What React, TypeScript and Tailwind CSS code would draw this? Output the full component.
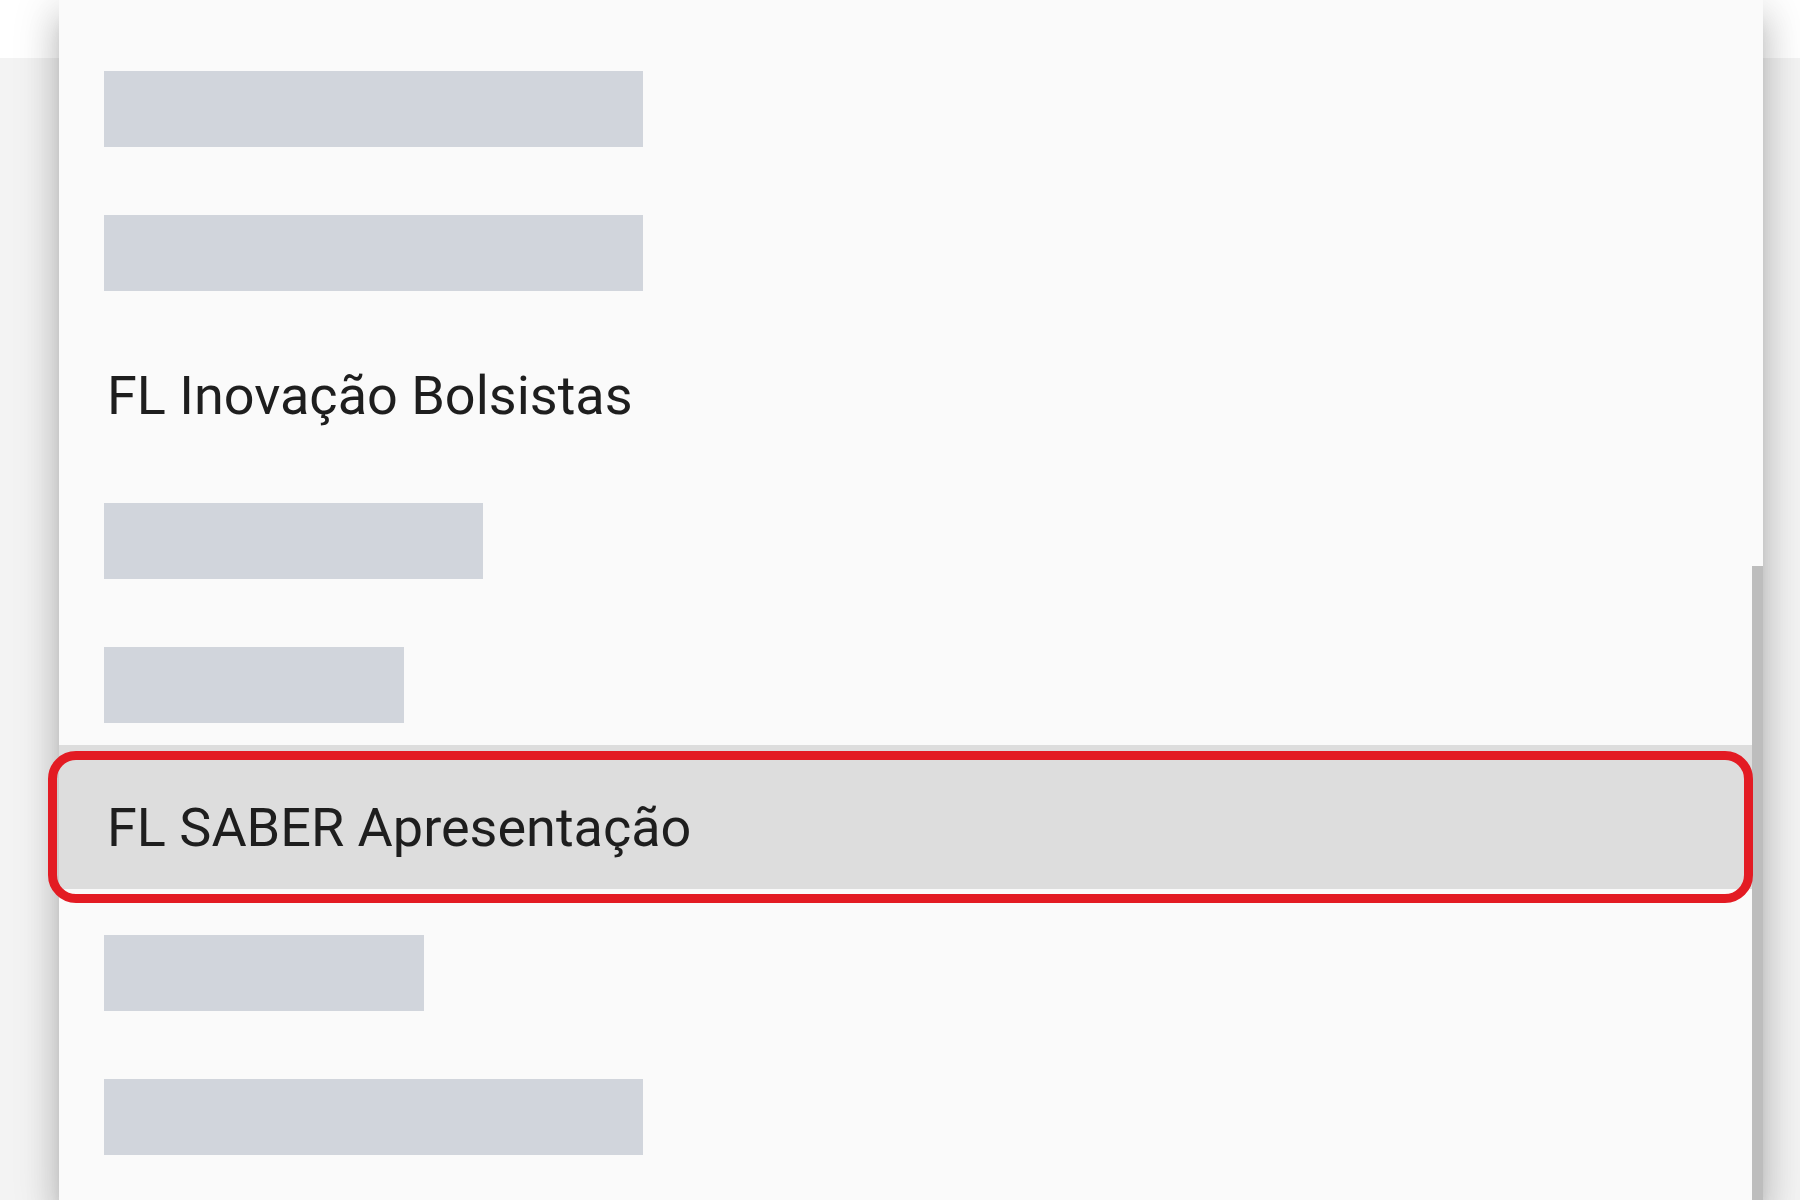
import React from 'react'

type Row =
  | { kind: 'bar'; width: string }
  | { kind: 'text'; label: string; selected?: boolean }

const rows: Row[] = [
  { kind: 'bar', width: 'w-[539px]' },
  { kind: 'bar', width: 'w-[539px]' },
  { kind: 'text', label: 'FL Inovação Bolsistas' },
  { kind: 'bar', width: 'w-[379px]' },
  { kind: 'bar', width: 'w-[300px]' },
  { kind: 'text', label: 'FL SABER Apresentação', selected: true },
  { kind: 'bar', width: 'w-[320px]' },
  { kind: 'bar', width: 'w-[539px]' },
]

export default function App() {
  return (
    <div
      className="relative w-[1800px] h-[1200px] overflow-hidden bg-[#f3f3f3]"
      style={{ fontFamily: 'Roboto, "Noto Sans", sans-serif' }}
    >
      {/* page behind the menu */}
      <div className="h-[58px] bg-white" />

      {/* menu popover */}
      <div className="absolute left-[59px] top-0 w-[1704px] h-[1200px] flex bg-[#fafafa] shadow-[0_15px_15px_-9px_rgba(0,0,0,0.2),0_24px_30px_3px_rgba(0,0,0,0.14),0_9px_42px_6px_rgba(0,0,0,0.12)]">
        <ul className="flex-1 pt-[25px]">
          {rows.map((row, i) =>
            row.kind === 'bar' ? (
              <li key={i} className="h-[144px] pt-[46px] pl-[45px]">
                <div className={`h-[76px] bg-[#d1d5dc] ${row.width}`} />
              </li>
            ) : (
              <li
                key={i}
                className={`relative h-[144px] pt-[56px] pl-[48px] ${row.selected ? 'bg-[#dddddd]' : ''}`}
              >
                <span className="block text-[54px] leading-[54px] text-[#1e1e1e] whitespace-nowrap">
                  {row.label}
                </span>
                {row.selected && (
                  <div className="absolute -left-[11px] -right-[1px] top-[6px] -bottom-[14px] border-[9px] border-[#e31b23] rounded-[28px]" />
                )}
              </li>
            )
          )}
        </ul>

        {/* scrollbar */}
        <div className="w-[11px] flex flex-col">
          <div className="h-[566px]" />
          <div className="flex-1 bg-[#bdbdbd]" />
        </div>
      </div>
    </div>
  )
}
